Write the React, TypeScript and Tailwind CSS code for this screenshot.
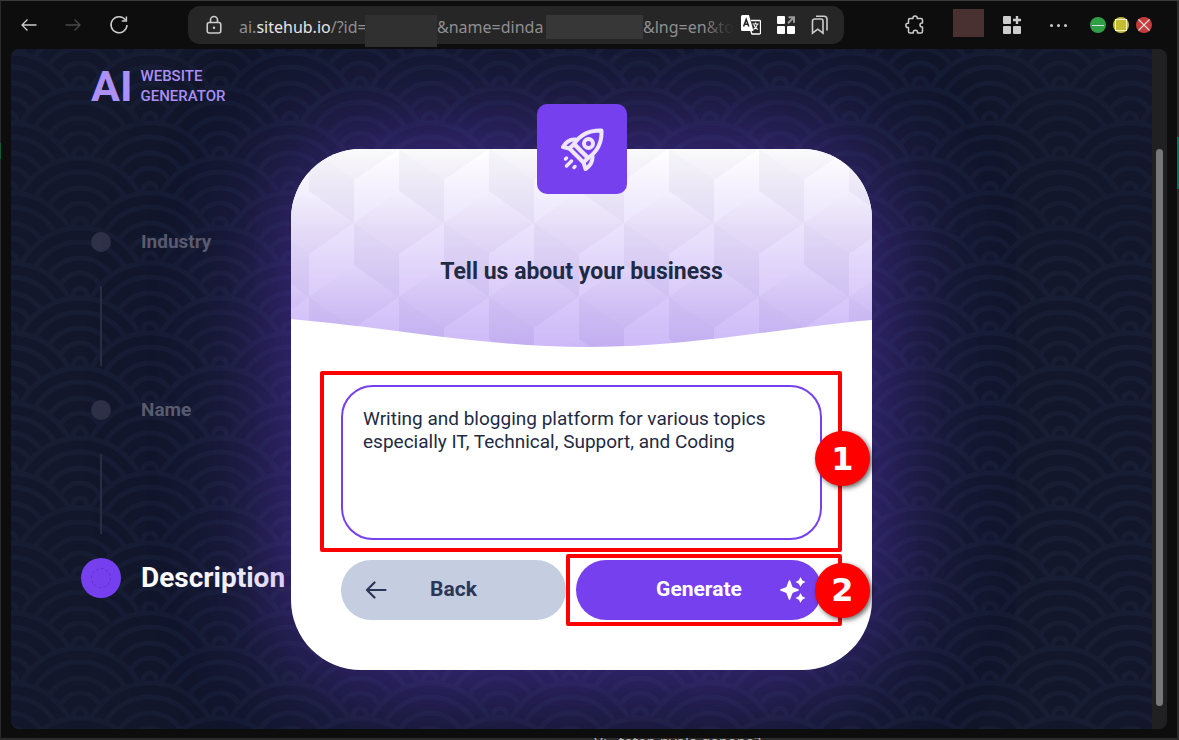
import { useState } from "react";

const ArrowIcon = ({ className }: { className?: string }) => (
  <svg viewBox="0 0 16 14" fill="none" stroke="currentColor" strokeWidth="1.3" className={className}>
    <path d="M15.5 7H1M6.5 1.5L1 7l5.500 5.500" />
  </svg>
);

const ReloadIcon = () => (
  <svg viewBox="0 0 20 20" fill="none" stroke="currentColor" strokeWidth="1.5" className="w-5 h-5">
    <path d="M16.600 5.200A8 8 0 1 0 18 10" />
    <path d="M17.400 1.500v4.600h-4.600" />
  </svg>
);

const LockIcon = () => (
  <svg viewBox="0 0 16 20" fill="none" stroke="currentColor" strokeWidth="1.6" className="w-4 h-5">
    <rect x="1.250" y="7.500" width="13.500" height="10.500" rx="2" />
    <path d="M4.500 7.500V5a3.500 3.500 0 0 1 7 0v2.500" />
    <circle cx="8" cy="12.700" r="1.200" fill="currentColor" stroke="none" />
  </svg>
);

const TranslateIcon = () => (
  <svg viewBox="0 0 20 20" className="w-5 h-5">
    <path d="M10 5.500h8.500a1 1 0 0 1 1 1v11.500a1 1 0 0 1-1 1H11L9.500 15" fill="none" stroke="#fff" strokeWidth="1.300" />
    <path d="M1.500 0H8l4.500 16H1.500A1.500 1.500 0 0 1 0 14.500v-13A1.500 1.500 0 0 1 1.500 0z" fill="#fff" />
    <path d="M2.600 11.500L5.200 4.500l2.600 7M3.500 9.300h3.400" fill="none" stroke="#222" strokeWidth="1.500" />
    <path d="M11.500 9h6M14.500 7.500V9M16.300 9.500c-.5 2.500-2 4-3.800 5M13 10c.6 2 2 3.500 3.800 4.500" fill="none" stroke="#fff" strokeWidth="1.100" />
  </svg>
);

const AppsIcon = () => (
  <svg viewBox="0 0 18 18" fill="#fff" className="w-[18px] h-[18px]">
    <rect width="8" height="8" rx="1" />
    <rect y="10" width="8" height="8" rx="1" />
    <rect x="10" y="10" width="8" height="8" rx="1" />
    <path d="M11.500 1.200H17v5.500M17 1.200L11 7.200" fill="none" stroke="#999" strokeWidth="2" />
  </svg>
);

const BookmarkIcon = () => (
  <svg viewBox="0 0 18 20" fill="none" stroke="currentColor" strokeWidth="1.600" className="w-[18px] h-5">
    <path d="M1.500 6a2 2 0 0 1 2-2h6.500a2 2 0 0 1 2 2v12.200L6.750 14.200 1.500 18.200z" />
    <path d="M5 1.200h8a3 3 0 0 1 3 3v11.300" />
  </svg>
);

const PuzzleIcon = () => (
  <svg viewBox="0 0 20 20" fill="none" stroke="currentColor" strokeWidth="1.500" strokeLinejoin="round" className="w-5 h-5">
    <path d="M5 3.500h3v-.4a2.100 2.100 0 0 1 4.200 0v.4H16a1.500 1.500 0 0 1 1.500 1.500v3H17a2 2 0 0 0 0 4h.5v4.500a1.500 1.500 0 0 1-1.500 1.500h-3.500v-.7a2 2 0 0 0-4.200 0v.7H5a1.500 1.500 0 0 1-1.500-1.500V12.500H3a2.100 2.100 0 0 1 0-4.200h.5V5A1.500 1.500 0 0 1 5 3.500z" />
  </svg>
);

const AddAppIcon = () => (
  <svg viewBox="0 0 18 18" fill="#ccc" className="w-[18px] h-[18px]">
    <rect width="8" height="8" rx="1" />
    <rect y="10" width="8" height="8" rx="1" />
    <rect x="10" y="10" width="8" height="8" rx="1" />
    <path d="M12.800 0h2.400v2.800H18v2.400h-2.800V8h-2.400V5.200H10V2.800h2.800z" />
  </svg>
);

const RocketIcon = () => (
  <svg viewBox="0 0 44 44" fill="none" stroke="#efe7ff" strokeWidth="4" strokeLinecap="round" strokeLinejoin="round" className="w-11 h-11">
    <path d="M14 17C20 8 29 3 41.500 3.500 42 16 37 25 28 31z" />
    <path d="M14 17l14 14-4.500 4.500L9.500 21.500z" />
    <path d="M15.500 12.500C9.500 12 6 14.500 3 20l6.500 1.500M32.500 29c.5 6-2 9.500-7 13l-2-6.500" />
    <circle cx="28.500" cy="16.500" r="4.500" />
    <path d="M6.500 31l-1 1M11.500 34l-5 5M15 39.500l-1 1" strokeWidth="3.500" />
  </svg>
);

const SparkleIcon = () => (
  <svg viewBox="0 0 26 26" fill="#fff" className="w-[26px] h-[26px]">
    <path d="M9.500 3c1 0 2.400 6.200 3.200 7 .8.800 6.300 2 6.300 3s-5.500 2.200-6.300 3c-.8.800-2.200 7-3.200 7s-2.400-6.200-3.200-7C5.500 15.200 0 14 0 13s5.500-2.200 6.300-3c.8-.8 2.200-7 3.200-7z" />
    <path d="M20.500 0l1.700 3.300L25.500 5l-3.300 1.700L20.500 10l-1.700-3.300L15.500 5l3.300-1.700zM20.500 16l1.700 3.300 3.300 1.700-3.300 1.700-1.700 3.300-1.700-3.300-3.300-1.700 3.300-1.700z" />
  </svg>
);

const waveCenters = [
  [70, -35],
  [0, 0],
  [140, 0],
  [-70, 35],
  [70, 35],
  [210, 35],
  [0, 70],
  [140, 70],
  [-70, 105],
  [210, 105],
  [70, 105],
  [0, 140],
  [140, 140],
];

const WaveBackground = () => (
  <svg className="absolute inset-0 w-full h-full" aria-hidden="true">
    <defs>
      <pattern id="waves" x="69" y="36" width="140" height="70" patternUnits="userSpaceOnUse">
        {waveCenters.map(([x, y]) => (
          <g key={`${x},${y}`} fill="none" stroke="#fff" strokeWidth="5">
            <circle cx={x} cy={y} r="67" fill="#000" />
            <circle cx={x} cy={y} r="53" />
            <circle cx={x} cy={y} r="37" />
            <circle cx={x} cy={y} r="22" />
            <circle cx={x} cy={y} r="7" />
          </g>
        ))}
      </pattern>
      <mask id="wave-mask">
        <rect width="100%" height="100%" fill="url(#waves)" />
      </mask>
    </defs>
    <rect width="100%" height="100%" fill="#3a4a70" opacity="0.12" mask="url(#wave-mask)" />
  </svg>
);

const cubes = [
  { y: -32, first: -27 },
  { y: 42, first: 18 },
  { y: 116, first: -27 },
  { y: 190, first: 18 },
].flatMap(({ y, first }) => Array.from({ length: 8 }, (_, i) => ({ x: first + i * 90, y })));

const CardBanner = () => (
  <svg viewBox="0 0 581 198" preserveAspectRatio="none" className="absolute inset-0 w-full h-full" aria-hidden="true">
    <defs>
      <linearGradient id="banner" x1="0" y1="0" x2="0" y2="1">
        <stop offset="0" stopColor="#ffffff" />
        <stop offset="1" stopColor="#cab5f8" />
      </linearGradient>
      <linearGradient id="cube-top" x1="0" y1="0" x2="0" y2="1">
        <stop offset="0" stopColor="#fff" stopOpacity="0.06" />
        <stop offset="1" stopColor="#221144" stopOpacity="0.03" />
      </linearGradient>
      <clipPath id="banner-shape">
        <path d="M0 0H581V171C480 180 400 198 297 198S110 180 0 170z" />
      </clipPath>
    </defs>
    <g clipPath="url(#banner-shape)">
      <rect width="581" height="198" fill="url(#banner)" />
      {cubes.map(({ x, y }) => (
        <g key={`${x},${y}`} transform={`translate(${x} ${y})`}>
          <path d="M0 0l45 32-45 31-45-31z" fill="url(#cube-top)" />
          <path d="M-45 32L0 63v43l-45-32z" fill="#221144" fillOpacity="0.04" />
          <path d="M45 32L0 63v43l45-32z" fill="#fff" fillOpacity="0.06" />
        </g>
      ))}
    </g>
  </svg>
);

const Toolbar = () => (
  <header className="flex items-center h-12 pl-[21px] pr-[27px] text-[#ccc]">
    <nav className="flex items-center gap-7">
      <button aria-label="Back">
        <ArrowIcon className="w-4 h-[14px]" />
      </button>
      <button aria-label="Forward" className="text-[#4a4a4a]">
        <ArrowIcon className="w-4 h-[14px] rotate-180" />
      </button>
      <button aria-label="Reload">
        <ReloadIcon />
      </button>
    </nav>

    <div className="flex flex-1 items-center h-[38px] ml-[59px] max-w-[656px] pl-[18px] pr-[15px] rounded-xl bg-[#262626]">
      <LockIcon />
      <div className="flex flex-1 min-w-0 items-center pt-1 ml-[17px] whitespace-nowrap text-base text-[#8f8f8f] font-['Noto_Sans',sans-serif]">
        <span className="w-[126px] shrink-0">
          ai.<span className="text-[#e4e4e4]">sitehub.io</span>/?id=
        </span>
        <span className="w-[72px] h-8 mt-2 shrink-0 bg-[#303030]" />
        <span className="w-[109px] shrink-0">&amp;name=dinda</span>
        <span className="w-[97px] h-6 shrink-0 bg-[#373737]" />
        <span>&amp;lng=en</span>
        <span className="bg-linear-to-r from-[#808080] to-[#262626] bg-clip-text text-transparent">&amp;to</span>
      </div>
      <div className="flex items-center gap-4">
        <button aria-label="Translate">
          <TranslateIcon />
        </button>
        <button aria-label="Split apps">
          <AppsIcon />
        </button>
        <button aria-label="Bookmarks">
          <BookmarkIcon />
        </button>
      </div>
    </div>

    <div className="flex items-center ml-auto">
      <button aria-label="Extensions">
        <PuzzleIcon />
      </button>
      <span className="w-[31px] h-7 ml-7 -mt-1 bg-[#493131]" />
      <button aria-label="Add app" className="ml-[19px]">
        <AddAppIcon />
      </button>
      <button aria-label="More" className="flex gap-1 ml-[29px]">
        <span className="w-[3px] h-[3px] rounded-full bg-[#ccc]" />
        <span className="w-[3px] h-[3px] rounded-full bg-[#ccc]" />
        <span className="w-[3px] h-[3px] rounded-full bg-[#ccc]" />
      </button>
      <div className="flex gap-[7px] ml-[23px]">
        <button aria-label="Minimize" className="flex items-center justify-center w-4 h-4 rounded-full bg-[#2f9e44]">
          <span className="w-3 h-px bg-[#dde]" />
        </button>
        <button aria-label="Maximize" className="flex items-center justify-center w-4 h-4 rounded-full bg-[#c3bd33]">
          <span className="w-3 h-3 border border-[#f0f0c0]" />
        </button>
        <button aria-label="Close" className="w-4 h-4 rounded-full bg-[#c63c3c]">
          <svg viewBox="0 0 16 16" stroke="#f3dada" strokeWidth="1.200">
            <path d="M2.500 2.500l11 11M13.500 2.500l-11 11" />
          </svg>
        </button>
      </div>
    </div>
  </header>
);

const Steps = () => (
  <ol className="flex flex-col text-[19px] font-bold text-[#5a5d6d]">
    {["Industry", "Name"].map((step) => (
      <li key={step} className="pl-[10px]">
        <div className="flex items-center h-10 gap-[30px]">
          <span className="w-5 h-5 rounded-full bg-[#2d3046]" />
          {step}
        </div>
        <div className="w-[2px] h-20 ml-[9px] my-6 bg-[#2b2e42]" />
      </li>
    ))}
    <li className="flex items-center h-10 gap-5 text-[28px] text-white">
      <span className="flex items-center justify-center w-10 h-10 rounded-full bg-[#7640ef]">
        <span className="w-5 h-5 rounded-full border border-dashed border-[#5f30cc]" />
      </span>
      Description
    </li>
  </ol>
);

const Highlight = ({ label, className }: { label: string; className: string }) => (
  <div className={`absolute flex items-center justify-end rounded-[2px] border-4 border-[#fe0000] pointer-events-none ${className}`}>
    <span className="flex items-center justify-center w-[55px] h-[55px] -mr-8 shrink-0 rounded-full bg-[#fe0000] text-[32px] font-bold text-white shadow-[2px_2px_5px_rgba(0,0,0,0.6)] font-['DejaVu_Sans',sans-serif]">
      {label}
    </span>
  </div>
);

const BusinessCard = () => {
  const [description, setDescription] = useState(
    "Writing and blogging platform for various topics especially IT, Technical, Support, and Coding"
  );

  return (
    <section className="relative mt-[100px] rounded-[70px] bg-white shadow-[0_0_120px_rgba(118,64,239,0.5),0_0_220px_rgba(80,70,220,0.16)]">
      <div className="relative h-[198px] overflow-hidden rounded-t-[70px]">
        <CardBanner />
        <h1 className="relative pt-[107px] text-center text-[23px] leading-8 font-bold text-[#1f2a44]">
          Tell us about your business
        </h1>
      </div>
      <div className="absolute -top-[45px] left-1/2 flex items-center justify-center w-[90px] h-[90px] -ml-[45px] rounded-[10px] bg-[#7640ef]">
        <RocketIcon />
      </div>

      <form className="px-[50px] pt-[38px] pb-[50px]" onSubmit={(e) => e.preventDefault()}>
        <div className="relative">
          <textarea
            aria-label="Business description"
            value={description}
            onChange={(e) => setDescription(e.target.value)}
            className="block w-full h-[155px] resize-none rounded-[32px] border-2 border-[#7640ef] px-5 pt-5 text-[19px] leading-[23px] text-[#1f2a44] outline-none"
          />
          <Highlight label="1" className="-left-[21px] -right-5 -top-[14px] -bottom-3 pb-[6px]" />
        </div>

        <div className="flex gap-[10px] mt-5">
          <button type="button" className="relative w-[225px] h-[60px] rounded-full bg-[#c5cde1] text-[21px] font-bold text-[#2a3658]">
            <svg viewBox="0 0 22 18" fill="none" stroke="currentColor" strokeWidth="2.200" strokeLinecap="round" strokeLinejoin="round" className="absolute left-6 top-[21px] w-[22px] h-[18px]">
              <path d="M20.500 9H2M9.500 1.500L2 9l7.500 7.500" />
            </svg>
            Back
          </button>
          <div className="relative flex-1">
            <button type="submit" className="w-full h-[60px] rounded-full bg-[#7640ef] text-[21px] font-bold text-white">
              Generate
              <span className="absolute right-4 top-[17px]">
                <SparkleIcon />
              </span>
            </button>
            <Highlight label="2" className="-left-[10px] -right-5 -inset-y-[6px]" />
          </div>
        </div>
      </form>
    </section>
  );
};

export default function App() {
  return (
    <div className="relative flex flex-col h-screen overflow-hidden border-t border-[#3a3a3a] bg-[#0d0d0d] font-['Roboto','Liberation_Sans',sans-serif]">
      <Toolbar />
      <div className="flex flex-1 min-h-0 ml-[11px] mr-3 rounded-lg overflow-hidden bg-[#202022]">
        <main className="relative flex-1 overflow-hidden bg-[#12172b]">
          <WaveBackground />
          <div className="relative grid grid-cols-[1fr_minmax(0,581px)_1fr]">
            <aside className="pl-[70px]">
              <div className="flex items-center gap-2 h-[74px] pl-[10px] text-[#ad90f5]">
                <span className="text-[43px] font-bold">AI</span>
                <span className="text-[15px] leading-5 font-medium">
                  WEBSITE
                  <br />
                  GENERATOR
                </span>
              </div>
              <div className="pt-[99px]">
                <Steps />
              </div>
            </aside>
            <BusinessCard />
          </div>
        </main>
        <div className="w-[15px] pt-[100px]">
          <div className="w-[7px] h-[557px] ml-1 rounded-full bg-[#777]" />
        </div>
      </div>
      <footer className="flex flex-col justify-end h-[11px] shrink-0">
        <p className="h-[2px] pl-[594px] overflow-hidden bg-[#2b2b2b] text-[15px] leading-[6px] text-[#bbb] font-['Noto_Sans',sans-serif]">
          Vi.. tetep nyala gapapa?
        </p>
      </footer>

      {/* edges of the window behind */}
      <div className="absolute inset-y-0 left-0 w-px bg-[#2b2b2b]">
        <div className="w-px h-4 mt-[142px] bg-[#0b5c3a]" />
      </div>
      <div className="absolute inset-y-0 right-0 w-[2px] bg-[#2b2b2b]">
        <div className="w-[2px] h-[52px] mt-[136px] bg-[#00735c]" />
      </div>
    </div>
  );
}
